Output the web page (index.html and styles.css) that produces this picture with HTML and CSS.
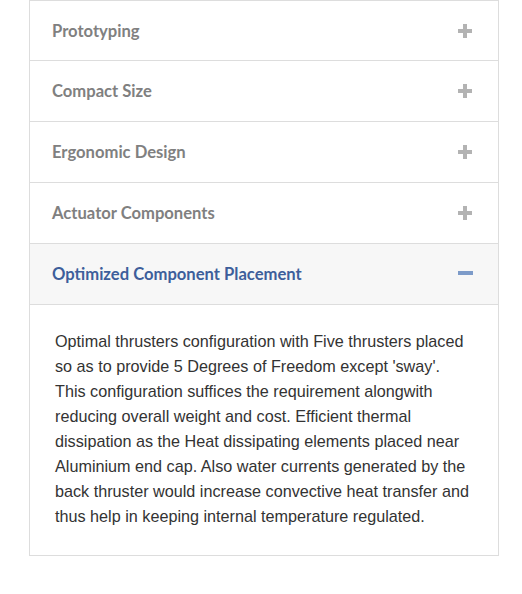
FILE: index.html
```html
<!DOCTYPE html>
<html>
<head>
<meta charset="utf-8">
<link rel="stylesheet" href="styles.css">
</head>
<body>
<div class="accordion">
  <div class="item">
    <div class="head"><span class="title">Prototyping</span><span class="icon plus"></span></div>
  </div>
  <div class="item">
    <div class="head"><span class="title">Compact Size</span><span class="icon plus"></span></div>
  </div>
  <div class="item">
    <div class="head"><span class="title">Ergonomic Design</span><span class="icon plus"></span></div>
  </div>
  <div class="item">
    <div class="head"><span class="title">Actuator Components</span><span class="icon plus"></span></div>
  </div>
  <div class="item open">
    <div class="head"><span class="title">Optimized Component Placement</span><span class="icon minus"></span></div>
    <div class="body">
      <p>Optimal thrusters configuration with Five thrusters placed so as to provide 5 Degrees of Freedom except 'sway'. This configuration suffices the requirement alongwith reducing overall weight and cost. Efficient thermal dissipation as the Heat dissipating elements placed near Aluminium end cap. Also water currents generated by the back thruster would increase convective heat transfer and thus help in keeping internal temperature regulated.</p>
    </div>
  </div>
</div>
</body>
</html>
```
FILE: styles.css
```css
html, body {
  margin: 0;
  padding: 0;
  background: #ffffff;
}
.accordion {
  margin-left: 29px;
  width: 470px;
  box-sizing: border-box;
  border: 1px solid #dddddd;
  border-bottom: none;
}
.item {
  border-bottom: 1px solid #dddddd;
}
.item:first-child .head {
  height: 59px;
}
.head {
  display: flex;
  align-items: center;
  justify-content: space-between;
  height: 60px;
  padding: 0 26px 0 22px;
  font-family: Lato, "Open Sans", sans-serif;
  font-weight: 700;
  font-size: 16.6px;
  color: #808080;
}
.open .head {
  background: #f7f7f7;
  color: #3d5e9b;
  border-bottom: 1px solid #dddddd;
}
.icon {
  position: relative;
  width: 14px;
  height: 14px;
}
.plus::before,
.plus::after,
.minus::before {
  content: "";
  position: absolute;
  background: #b3b3b3;
}
.plus::before {
  left: 0;
  top: 5px;
  width: 14px;
  height: 4px;
}
.plus::after {
  left: 5px;
  top: 0;
  width: 4px;
  height: 14px;
}
.minus::before {
  left: 0;
  top: 4px;
  width: 15px;
  height: 4px;
  background: #7d9bc9;
}
.body {
  padding: 24px 27px 26px 25px;
  font-family: "Liberation Sans", Arial, sans-serif;
  font-size: 16.2px;
  line-height: 25px;
  color: #333333;
}
.body p {
  margin: 0;
}
```
